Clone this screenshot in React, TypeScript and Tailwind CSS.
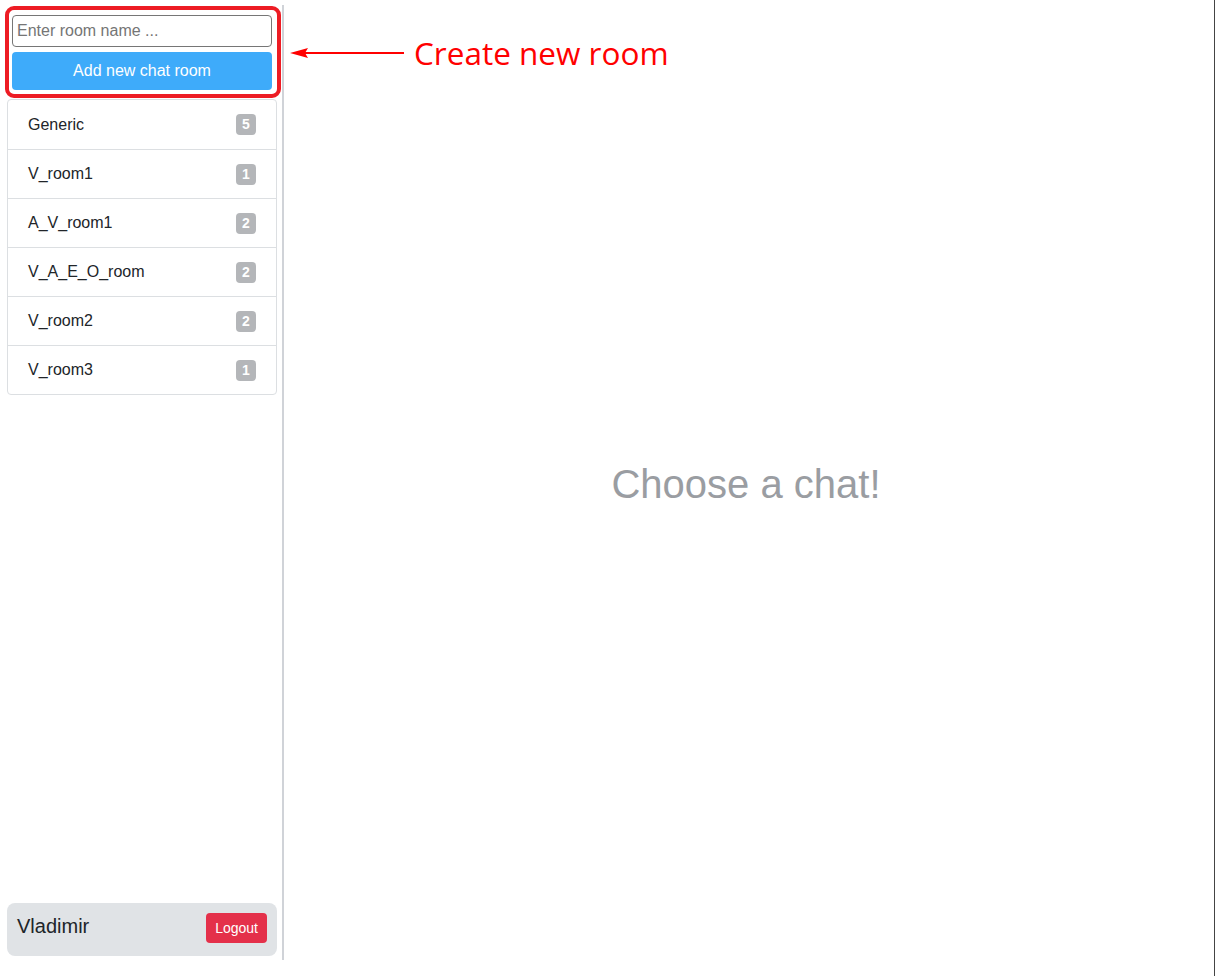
const rooms = [
  { name: "Generic", count: 5 },
  { name: "V_room1", count: 1 },
  { name: "A_V_room1", count: 2 },
  { name: "V_A_E_O_room", count: 2 },
  { name: "V_room2", count: 2 },
  { name: "V_room3", count: 1 },
];

const Sidebar = () => {
  return (
    <div className="relative mt-[5px] h-[955px] w-[284px] shrink-0 border-r-2 border-[#d0d3d8] pl-[7px] pr-[5px] pb-[4px] flex flex-col">
      {/* create room form */}
      <div className="mt-[5px] p-[5px] flex flex-col gap-[5px]">
        <input
          className="h-[32px] w-full rounded-[4px] border border-[#767676] px-[4px] text-[16px] text-[#212529] placeholder:text-[#757575] outline-none"
          placeholder="Enter room name ..."
        />
        <button className="h-[38px] w-full rounded-[4px] bg-[#3eabfa] text-[16px] text-white">
          Add new chat room
        </button>
      </div>

      <ul className="mt-[4px] rounded-[4px] border border-[#dcdfe2]">
        {rooms.map((r, i) => (
          <li
            key={r.name}
            className={
              "h-[49px] flex items-center justify-between pl-[20px] pr-[20px] text-[16px] text-[#212529] " +
              (i > 0 ? "border-t border-[#dcdfe2]" : "")
            }
          >
            <span>{r.name}</span>
            <span className="flex h-[21px] w-[20px] items-center justify-center rounded-[4px] bg-[#b4b6b9] text-[14px] font-bold text-white">
              {r.count}
            </span>
          </li>
        ))}
      </ul>

      <div className="mt-auto h-[53px] rounded-[8px] bg-[#e0e3e6] pl-[10px] pr-[10px] flex items-start justify-between">
        <span className="mt-[8px] text-[20px] text-[#212529]">Vladimir</span>
        <button className="mt-[10px] h-[30px] rounded-[4px] bg-[#e4304a] px-[9px] text-[14px] text-white">
          Logout
        </button>
      </div>

      {/* annotation box */}
      <div className="pointer-events-none absolute left-[5px] top-[1px] h-[92px] w-[276px] rounded-[9px] border-4 border-[#ed1c24]" />
    </div>
  );
};

const App = () => {
  return (
    <div
      className="relative flex h-[976px] w-[1215px] border-r border-[#444] bg-white"
      style={{ fontFamily: '"Liberation Sans", Arial, sans-serif' }}
    >
      <Sidebar />
      <main className="flex flex-1 items-center justify-center pb-[8px] pr-[6px]">
        <p className="text-[40px] text-[#9a9da2]">Choose a chat!</p>
      </main>

      {/* annotation arrow + label */}
      <div className="pointer-events-none absolute left-[290px] top-[37px] flex items-center gap-[10px]">
        <svg width="114" height="12" viewBox="0 0 114 12">
          <line x1="14" y1="6" x2="114" y2="6" stroke="#ff0000" strokeWidth="2" />
          <polygon points="0,6 18,1 15,6 18,11" fill="#ff0000" />
        </svg>
        <span
          className="text-[31.5px] leading-none text-[#ff0000]"
          style={{ fontFamily: '"Open Sans", "Noto Sans", sans-serif' }}
        >
          Create new room
        </span>
      </div>
    </div>
  );
};

export default App;
